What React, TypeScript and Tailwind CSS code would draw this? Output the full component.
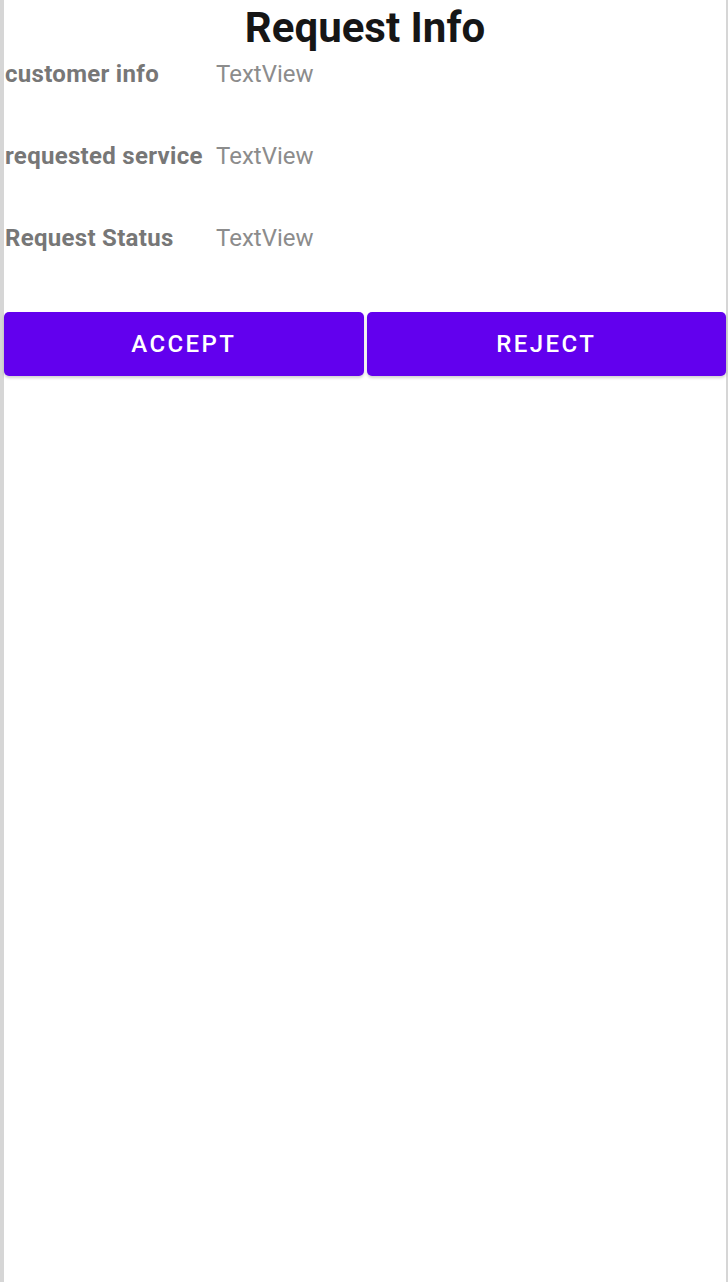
import React from "react";

const rows = [
  { label: "customer info", value: "TextView" },
  { label: "requested service", value: "TextView" },
  { label: "Request Status", value: "TextView" },
];

const App: React.FC = () => {
  return (
    <div className="flex min-h-screen flex-col border-l-4 border-r-2 border-[#d6d6d6] bg-white font-['Roboto',sans-serif]">
      {/* Title */}
      <h1 className="text-center text-[42px] font-bold leading-[56px] text-[#161616]">
        Request Info
      </h1>

      {/* Info rows */}
      <div className="mt-1 flex flex-col gap-[54px] pl-px">
        {rows.map((row) => (
          <div key={row.label} className="grid grid-cols-[211px_1fr] text-[24px] leading-[28px]">
            <span className="font-bold tracking-[0.3px] text-[#777777]">{row.label}</span>
            <span className="text-[#8c8c8c]">{row.value}</span>
          </div>
        ))}
      </div>

      {/* Actions */}
      <div className="mt-[60px] flex gap-[3px]">
        <button className="h-16 flex-1 rounded-[5px] bg-[#6200ee] text-[24px] font-medium tracking-[0.1em] text-white shadow-[0_2px_3px_rgba(0,0,0,0.18)]">
          ACCEPT
        </button>
        <button className="h-16 flex-1 rounded-[5px] bg-[#6200ee] text-[24px] font-medium tracking-[0.1em] text-white shadow-[0_2px_3px_rgba(0,0,0,0.18)]">
          REJECT
        </button>
      </div>
    </div>
  );
};

export default App;
